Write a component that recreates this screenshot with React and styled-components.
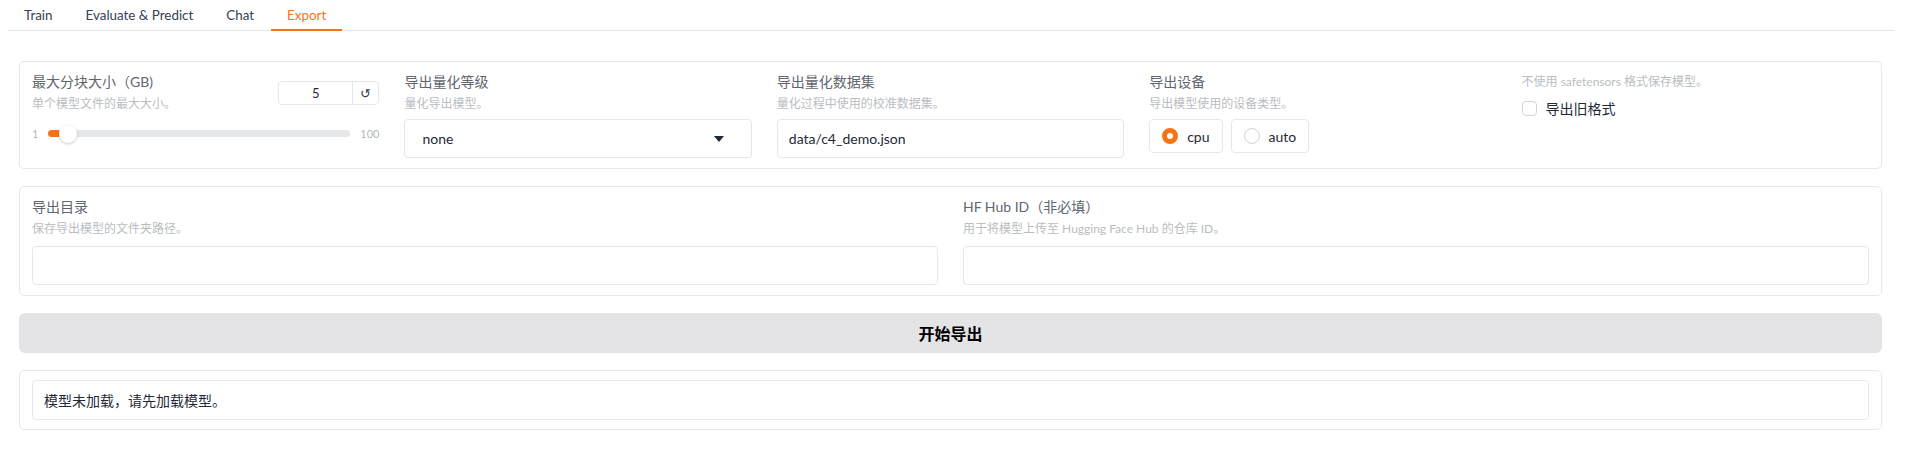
import React, { useState } from "react";
import styled, { createGlobalStyle } from "styled-components";

const GlobalStyle = createGlobalStyle`
  body {
    margin: 0;
    background: #fff;
    font-family: "Lato", "Noto Sans CJK SC", sans-serif;
    color: #1f2937;
  }
`;

const Page = styled.div`
  width: 1903px;
`;

const TabBar = styled.div`
  display: flex;
  margin: 0 9px 0 8px;
  border-bottom: 1px solid #e5e7eb;
  height: 30px;
`;

const Tab = styled.button`
  background: none;
  border: none;
  padding: 0 16px;
  margin-right: 1px;
  font-family: inherit;
  font-size: 13.4px;
  color: ${(p) => (p.active ? "#f97316" : "#374151")};
  border-bottom: 2px solid ${(p) => (p.active ? "#f97316" : "transparent")};
  margin-bottom: -1px;
  cursor: pointer;
`;

const Content = styled.div`
  padding: 30px 21px 20px 19px;
  display: flex;
  flex-direction: column;
  gap: 17px;
`;

const Panel = styled.div`
  border: 1px solid #e5e7eb;
  border-radius: 5px;
  padding: 10px 12px;
  display: grid;
  grid-template-columns: repeat(${(p) => p.cols}, 1fr);
  column-gap: 25px;
`;

const Field = styled.div`
  display: flex;
  flex-direction: column;
  min-width: 0;
`;

const Label = styled.div`
  font-size: 14px;
  line-height: 20px;
  color: #5f6670;
`;

const Info = styled.div`
  font-size: 12px;
  line-height: 18px;
  margin-top: 3px;
  color: #babdc2;
`;

const TextBox = styled.div`
  margin-top: ${(p) => p.gap || 6}px;
  height: 39px;
  box-sizing: border-box;
  border: 1px solid #e5e7eb;
  border-radius: 4px;
  display: flex;
  align-items: center;
  justify-content: space-between;
  padding: 0 11px;
  font-size: 14px;
  color: #1f2937;
`;

const Caret = styled.span`
  width: 0;
  height: 0;
  border-left: 5px solid transparent;
  border-right: 5px solid transparent;
  border-top: 6px solid #1f2937;
  margin-right: 16px;
`;

const SizeHead = styled.div`
  display: flex;
  justify-content: space-between;
  align-items: center;
`;

const NumberBox = styled.div`
  display: flex;
  width: 101px;
  height: 24px;
  box-sizing: border-box;
  border: 1px solid #e5e7eb;
  border-radius: 4px;
  font-size: 13px;
  color: #1f2937;
`;

const NumberValue = styled.div`
  flex: 1;
  display: flex;
  align-items: center;
  justify-content: center;
  border-right: 1px solid #e5e7eb;
`;

const ResetBtn = styled.div`
  width: 25px;
  display: flex;
  align-items: center;
  justify-content: center;
  font-size: 13px;
  color: #374151;
`;

const SliderRow = styled.div`
  display: flex;
  align-items: center;
  margin-top: 14px;
  font-size: 11px;
  color: #b3b7bd;
  gap: 10px;
`;

const Track = styled.div`
  position: relative;
  flex: 1;
  height: 7px;
  border-radius: 4px;
  background: #e5e7eb;
`;

const Fill = styled.div`
  height: 100%;
  border-radius: 4px;
  background: #f97316;
`;

const Thumb = styled.div`
  position: absolute;
  top: 50%;
  width: 18px;
  height: 18px;
  margin-left: -9px;
  transform: translateY(-50%);
  border-radius: 50%;
  background: #fff;
  box-shadow: 0 1px 3px rgba(0, 0, 0, 0.2);
`;

const RadioGroup = styled.div`
  display: flex;
  gap: 8px;
  margin-top: 6px;
`;

const RadioItem = styled.label`
  display: flex;
  align-items: center;
  gap: 9px;
  height: 34px;
  box-sizing: border-box;
  padding: 0 12px;
  border: 1px solid #e5e7eb;
  border-radius: 4px;
  font-size: 14px;
  color: #1f2937;
`;

const RadioDot = styled.span`
  width: 16px;
  height: 16px;
  box-sizing: border-box;
  border-radius: 50%;
  border: ${(p) => (p.checked ? "5px solid #f97316" : "1px solid #d1d5db")};
  background: #fff;
`;

const CheckRow = styled.label`
  display: flex;
  align-items: center;
  gap: 9px;
  margin-top: 6px;
  font-size: 14px;
  color: #1f2937;
`;

const CheckBox = styled.span`
  width: 15px;
  height: 15px;
  box-sizing: border-box;
  border: 1px solid #d1d5db;
  border-radius: 4px;
`;

const ActionButton = styled.button`
  height: 40px;
  border: none;
  border-radius: 6px;
  background: #e4e4e7;
  font-family: inherit;
  font-size: 16px;
  font-weight: 700;
  color: #000;
  cursor: pointer;
`;

const OutputPanel = styled.div`
  border: 1px solid #e5e7eb;
  border-radius: 5px;
  padding: 9px 12px;
`;

const OutputBox = styled.div`
  height: 40px;
  box-sizing: border-box;
  border: 1px solid #e5e7eb;
  border-radius: 4px;
  padding: 0 11px;
  display: flex;
  align-items: center;
  font-size: 14px;
  color: #1f2937;
`;

const tabs = ["Train", "Evaluate & Predict", "Chat", "Export"];

export default function App() {
  const [active, setActive] = useState("Export");
  const [device, setDevice] = useState("cpu");
  const size = 5;
  const pct = ((size - 1) / 99) * 100;

  return (
    <Page>
      <GlobalStyle />
      <TabBar>
        {tabs.map((t) => (
          <Tab key={t} active={t === active} onClick={() => setActive(t)}>
            {t}
          </Tab>
        ))}
      </TabBar>
      <Content>
        <Panel cols={5}>
          <Field>
            <SizeHead>
              <div>
                <Label>最大分块大小（GB)</Label>
                <Info>单个模型文件的最大大小。</Info>
              </div>
              <NumberBox>
                <NumberValue>{size}</NumberValue>
                <ResetBtn>↺</ResetBtn>
              </NumberBox>
            </SizeHead>
            <SliderRow>
              <span>1</span>
              <Track>
                <Fill style={{ width: `${pct}%` }} />
                <Thumb style={{ left: `calc(${pct}% + 7px)` }} />
              </Track>
              <span>100</span>
            </SliderRow>
          </Field>
          <Field>
            <Label>导出量化等级</Label>
            <Info>量化导出模型。</Info>
            <TextBox>
              <span style={{ paddingLeft: 6 }}>none</span>
              <Caret />
            </TextBox>
          </Field>
          <Field>
            <Label>导出量化数据集</Label>
            <Info>量化过程中使用的校准数据集。</Info>
            <TextBox>data/c4_demo.json</TextBox>
          </Field>
          <Field>
            <Label>导出设备</Label>
            <Info>导出模型使用的设备类型。</Info>
            <RadioGroup>
              {["cpu", "auto"].map((d) => (
                <RadioItem key={d} onClick={() => setDevice(d)}>
                  <RadioDot checked={device === d} />
                  {d}
                </RadioItem>
              ))}
            </RadioGroup>
          </Field>
          <Field>
            <Info style={{ marginTop: 0, lineHeight: "20px" }}>
              不使用 safetensors 格式保存模型。
            </Info>
            <CheckRow>
              <CheckBox />
              导出旧格式
            </CheckRow>
          </Field>
        </Panel>
        <Panel cols={2}>
          <Field>
            <Label>导出目录</Label>
            <Info>保存导出模型的文件夹路径。</Info>
            <TextBox gap={8} />
          </Field>
          <Field>
            <Label>HF Hub ID（非必填）</Label>
            <Info>用于将模型上传至 Hugging Face Hub 的仓库 ID。</Info>
            <TextBox gap={8} />
          </Field>
        </Panel>
        <ActionButton>开始导出</ActionButton>
        <OutputPanel>
          <OutputBox>模型未加载，请先加载模型。</OutputBox>
        </OutputPanel>
      </Content>
    </Page>
  );
}
